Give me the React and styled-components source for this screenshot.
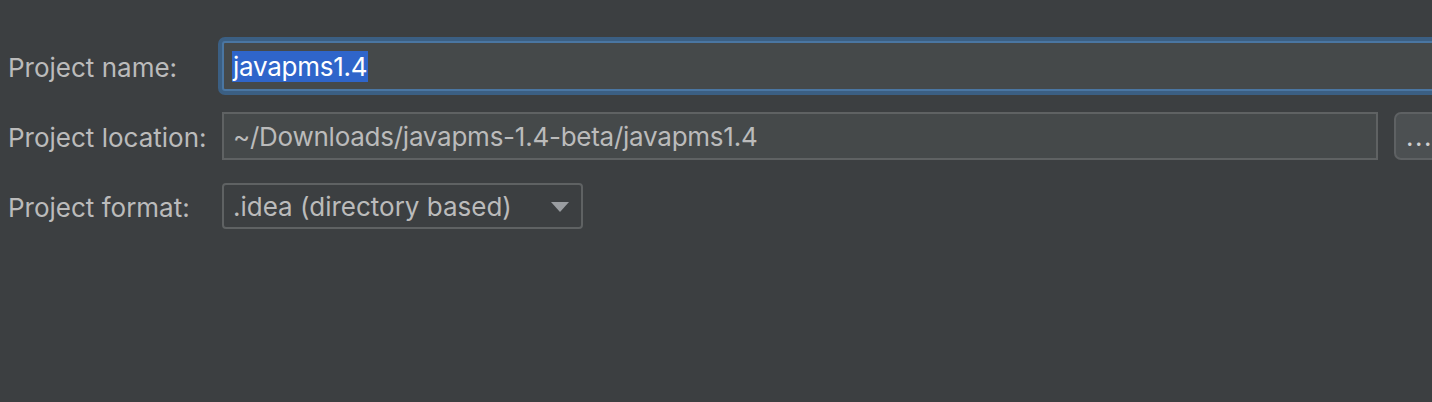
import React from 'react';
import styled, { createGlobalStyle } from 'styled-components';

const Global = createGlobalStyle`
    html, body {
        margin: 0;
        padding: 0;
        background: #3c3f41;
        overflow: hidden;
    }
    body {
        font-family: "Inter", "Liberation Sans", sans-serif;
    }
`;

function App() {
    return (
        <>
            <Global />
            <Page>
                <Form>
                    <Row $h={50}>
                        <Label>Project name:</Label>
                        <NameField>
                            <Selected>javapms1.4</Selected>
                        </NameField>
                    </Row>
                    <Row $h={48}>
                        <Label>Project location:</Label>
                        <Field>~/Downloads/javapms-1.4-beta/javapms1.4</Field>
                        <Browse>...</Browse>
                    </Row>
                    <Row $h={46} $mt={2}>
                        <Label>Project format:</Label>
                        <Select>
                            <span>.idea (directory based)</span>
                            <Arrow />
                        </Select>
                    </Row>
                </Form>
            </Page>
        </>
    )
}

export default App

const Page = styled.div`
    width: 1432px;
    height: 402px;
    overflow: hidden;
    background: #3c3f41;
`;
const Form = styled.div`
    padding: 41px 0 0 8px;
    display: flex;
    flex-direction: column;
    gap: 21px;
    width: 1480px;
`;
const Row = styled.div`
    display: flex;
    align-items: center;
    height: ${p => p.$h}px;
    margin-top: ${p => p.$mt || 0}px;
`;
const Label = styled.div`
    width: 214px;
    flex-shrink: 0;
    font-size: 26px;
    color: #bbbbbb;
    padding-top: 2px;
`;
const NameField = styled.div`
    flex: 1;
    height: 100%;
    box-sizing: border-box;
    background: #45494a;
    border: 2px solid #4a76a2;
    box-shadow: 0 0 0 4px #3b5f83;
    border-radius: 3px;
    display: flex;
    align-items: center;
    padding-left: 8px;
`;
const Selected = styled.span`
    background: #2f65ca;
    color: #ffffff;
    font-size: 26px;
    line-height: 31px;
    letter-spacing: -0.25px;
    padding: 0 1px;
`;
const Field = styled.div`
    width: 1156px;
    flex-shrink: 0;
    height: 100%;
    box-sizing: border-box;
    background: #45494a;
    border: 2px solid #5f6263;
    display: flex;
    align-items: center;
    padding-left: 9px;
    font-size: 26px;
    letter-spacing: -0.25px;
    color: #bbbbbb;
`;
const Browse = styled.div`
    margin-left: 16px;
    width: 70px;
    flex-shrink: 0;
    height: 100%;
    box-sizing: border-box;
    background: #4c5052;
    border: 2px solid #5e6163;
    border-radius: 7px;
    display: flex;
    align-items: center;
    padding-left: 10px;
    font-size: 26px;
    letter-spacing: 1.5px;
    color: #d0d0d0;
`;
const Select = styled.div`
    width: 361px;
    height: 100%;
    box-sizing: border-box;
    background: #3c3f41;
    border: 2px solid #5f6263;
    border-radius: 4px;
    display: flex;
    align-items: center;
    justify-content: space-between;
    padding: 0 12px 0 9px;
    font-size: 26px;
    color: #bbbbbb;
`;
const Arrow = styled.span`
    width: 0;
    height: 0;
    border-left: 9px solid transparent;
    border-right: 9px solid transparent;
    border-top: 10px solid #9a9da1;
    margin-top: 2px;
`;
